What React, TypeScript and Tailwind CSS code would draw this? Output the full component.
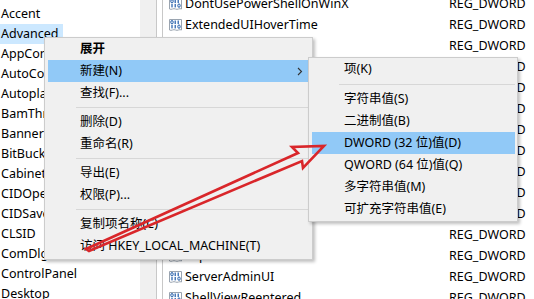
import React from "react";

const treeItems = [
  "Accent",
  "Advanced",
  "AppContract",
  "AutoComplete",
  "AutoplayHandlers",
  "BamThrottling",
  "BannerStore",
  "BitBucket",
  "CabinetState",
  "CIDOpen",
  "CIDSave",
  "CLSID",
  "ComDlg32",
  "ControlPanel",
  "Desktop",
];

const values = [
  "DontUsePowerShellOnWinX",
  "ExtendedUIHoverTime",
  "Filter",
  "HideFileExt",
  "HideIcons",
  "Hidden",
  "IconsOnly",
  "LaunchTo",
  "ListviewAlphaSelect",
  "ListviewShadow",
  "MapNetDrvBtn",
  "ReindexedProfile",
  "SeparateProcess",
  "ServerAdminUI",
  "ShellViewReentered",
];

function DwordIcon() {
  return (
    <svg width="13" height="13" viewBox="0 0 13 13" className="shrink-0">
      <path d="M0.5 0.5h12v10.5c-2 -1.2 -4 1.2 -6 0s-4 1.2 -6 0z" fill="#fff" stroke="#9aa4b0" />
      <g fill="none" stroke="#1e5aa8" strokeWidth="1">
        <ellipse cx="3" cy="3.2" rx="1.2" ry="1.7" />
        <ellipse cx="10" cy="7.6" rx="1.2" ry="1.7" />
      </g>
      <g fill="#1e5aa8">
        <rect x="5.6" y="1.5" width="1.2" height="3.5" />
        <rect x="8.6" y="1.5" width="1.2" height="3.5" />
        <rect x="2.4" y="5.9" width="1.2" height="3.5" />
        <rect x="5.6" y="5.9" width="1.2" height="3.5" />
      </g>
    </svg>
  );
}

function MenuItem({
  label,
  active,
  bold,
  arrow,
}: {
  label: string;
  active?: boolean;
  bold?: boolean;
  arrow?: boolean;
}) {
  return (
    <div
      className={
        "relative h-[22px] flex items-center pl-[32px] " +
        (active ? "bg-[#91c9f7]" : "") +
        (bold ? " font-bold" : "")
      }
    >
      {label}
      {arrow && (
        <svg width="6" height="9" viewBox="0 0 6 9" className="absolute right-[6px] top-[7px]">
          <path d="M1 1l3.5 3.5L1 8" fill="none" stroke="#333" strokeWidth="1.1" />
        </svg>
      )}
    </div>
  );
}

function Sep() {
  return (
    <div className="h-[7px] flex items-center">
      <div className="h-px bg-[#d7d7d7] flex-1 ml-[28px]" />
    </div>
  );
}

export default function App() {
  return (
    <div
      className="relative w-[534px] h-[299px] overflow-hidden bg-white text-black text-[12.5px]"
      style={{ fontFamily: "'Noto Sans', 'Noto Sans CJK SC', sans-serif" }}
    >
      <div className="flex h-full">
        {/* tree pane */}
        <div className="w-[140px] pt-[4px] overflow-hidden">
          {treeItems.map((t, i) => (
            <div key={t} className="h-5 leading-5 whitespace-nowrap">
              <span className={"px-[1px] pr-[4px] inline-block " + (i === 1 ? "bg-[#cce8ff]" : "")}>{t}</span>
            </div>
          ))}
        </div>
        <div className="w-[17px] bg-[#f0f0f0] border-r border-[#c8c8c8]" />
        <div className="w-[5px]" />
        {/* list pane */}
        <div className="flex-1 border-l border-[#c8c8c8] overflow-hidden">
          <div className="mt-[-6px]">
            {values.map((v) => (
              <div key={v} className="h-[21px] flex items-center whitespace-nowrap">
                <div className="w-[182px] flex items-center pl-[6px] gap-[3px]">
                  <DwordIcon />
                  <span>{v}</span>
                </div>
                <div className="pl-[104px]">REG_DWORD</div>
              </div>
            ))}
          </div>
        </div>
      </div>

      {/* context menu */}
      <div className="absolute left-[44px] top-[37px] w-[269px] bg-[#f0f0f0] border border-[#cccccc] px-[3px] pt-0 pb-[2px] shadow-[2px_2px_3px_rgba(0,0,0,0.25)] whitespace-nowrap">
        <MenuItem label="展开" bold />
        <MenuItem label="新建(N)" active arrow />
        <MenuItem label="查找(F)..." />
        <Sep />
        <MenuItem label="删除(D)" />
        <MenuItem label="重命名(R)" />
        <Sep />
        <MenuItem label="导出(E)" />
        <MenuItem label="权限(P)..." />
        <Sep />
        <MenuItem label="复制项名称(C)" />
        <MenuItem label="访问 HKEY_LOCAL_MACHINE(T)" />
      </div>

      {/* submenu */}
      <div className="absolute left-[308px] top-[57px] w-[210px] bg-[#f0f0f0] border border-[#cccccc] pl-[3px] pr-[2px] pb-[1px] shadow-[2px_2px_3px_rgba(0,0,0,0.25)] whitespace-nowrap">
        <MenuItem label="项(K)" />
        <div className="h-[8px] flex items-center">
          <div className="h-px bg-[#d7d7d7] flex-1 ml-[27px]" />
        </div>
        <MenuItem label="字符串值(S)" />
        <MenuItem label="二进制值(B)" />
        <MenuItem label="DWORD (32 位)值(D)" active />
        <MenuItem label="QWORD (64 位)值(Q)" />
        <MenuItem label="多字符串值(M)" />
        <MenuItem label="可扩充字符串值(E)" />
      </div>

      {/* red annotation arrow */}
      <svg className="absolute left-0 top-0 pointer-events-none" width="534" height="299" viewBox="0 0 534 299">
        <path
          d="M86 249 L298 153 L292 147 L324 146 L303 168 L302 161 L89 251 Z"
          fill="none"
          stroke="#d9262a"
          strokeWidth="2.6"
          strokeLinejoin="miter"
        />
      </svg>
    </div>
  );
}
